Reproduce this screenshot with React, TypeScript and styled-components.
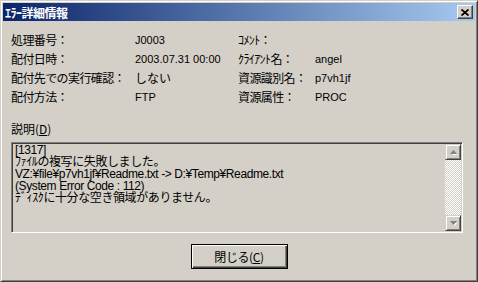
import React from "react";
import styled, { createGlobalStyle } from "styled-components";

const GlobalStyle = createGlobalStyle`
  html, body {
    margin: 0;
    padding: 0;
    background: #d4d0c8;
  }
  body {
    font-family: "Liberation Sans", "Noto Sans CJK JP", sans-serif;
    font-size: 12px;
    color: #000;
  }
`;

const FACE = "#d4d0c8";

const Window = styled.div`
  box-sizing: border-box;
  width: 478px;
  height: 282px;
  background: ${FACE};
  border-top: 1px solid ${FACE};
  border-left: 1px solid ${FACE};
  border-right: 1px solid #404040;
  border-bottom: 1px solid #404040;
  box-shadow: inset 1px 1px #fff, inset -1px -1px #808080;
  padding: 2px;
  display: flex;
  flex-direction: column;
`;

const TitleBar = styled.div`
  height: 18px;
  display: flex;
  align-items: center;
  justify-content: space-between;
  padding: 0 2px 0 2px;
  background: linear-gradient(to right, #0a246a, #a6caf0);
`;

const Title = styled.span`
  color: #fff;
  font-weight: bold;
  font-size: 12px;
  font-family: "Noto Sans CJK JP", sans-serif;
  letter-spacing: -0.5px;
`;

const CloseButton = styled.div`
  box-sizing: border-box;
  width: 16px;
  height: 14px;
  background: ${FACE};
  border-top: 1px solid #fff;
  border-left: 1px solid #fff;
  border-right: 1px solid #404040;
  border-bottom: 1px solid #404040;
  box-shadow: inset -1px -1px #808080;
  display: flex;
  align-items: center;
  justify-content: center;
`;

const Body = styled.div`
  flex: 1;
  padding: 9px 8px 0 8px;
  display: flex;
  flex-direction: column;
`;

const InfoGrid = styled.div`
  display: grid;
  grid-template-columns: 124px 103px 77px 1fr;
  grid-auto-rows: 19px;
  align-items: center;
`;

const Label = styled.span`
  font-family: "Noto Sans CJK JP", sans-serif;
  font-size: 12px;
  white-space: nowrap;
  letter-spacing: -0.6px;
`;

const Value = styled.span<{ $jp?: boolean }>`
  font-size: ${({ $jp }) => ($jp ? "12px" : "11px")};
  font-family: ${({ $jp }) =>
    $jp ? '"Noto Sans CJK JP", sans-serif' : '"Liberation Sans", sans-serif'};
  white-space: nowrap;
`;

const SectionLabel = styled.div`
  margin-top: 16px;
  margin-bottom: 6px;
  line-height: 14px;
  font-family: "Noto Sans CJK JP", sans-serif;
`;

const TextBox = styled.div`
  box-sizing: border-box;
  width: 452px;
  height: 91px;
  display: flex;
  border-top: 1px solid #808080;
  border-left: 1px solid #808080;
  border-right: 1px solid #fff;
  border-bottom: 1px solid #fff;
  box-shadow: inset 1px 1px #404040, inset -1px -1px ${FACE};
  padding: 1px;
  background: ${FACE};
`;

const TextArea = styled.div`
  flex: 1;
  padding: 0 2px;
  overflow: hidden;
  white-space: pre;
  font-family: "Liberation Sans", "Noto Sans CJK JP", sans-serif;
  font-size: 12px;
  line-height: 12px;
  letter-spacing: -0.4px;
`;

const ScrollBar = styled.div`
  width: 16px;
  display: flex;
  flex-direction: column;
`;

const ScrollButton = styled.div`
  box-sizing: border-box;
  width: 16px;
  height: 16px;
  background: ${FACE};
  border-top: 1px solid ${FACE};
  border-left: 1px solid ${FACE};
  border-right: 1px solid #404040;
  border-bottom: 1px solid #404040;
  box-shadow: inset 1px 1px #fff, inset -1px -1px #808080;
  display: flex;
  align-items: center;
  justify-content: center;
`;

const Track = styled.div`
  flex: 1;
  background: repeating-conic-gradient(#fff 0 25%, ${FACE} 0 50%) 0 0 / 2px 2px;
`;

const ButtonRow = styled.div`
  display: flex;
  justify-content: center;
  margin-top: 11px;
`;

const DefaultButton = styled.div`
  box-sizing: border-box;
  width: 97px;
  height: 25px;
  border: 1px solid #000;
  background: ${FACE};
  box-shadow: inset 1px 1px #fff, inset -1px -1px #404040, inset -2px -2px #808080;
  display: flex;
  align-items: center;
  justify-content: center;
  font-family: "Noto Sans CJK JP", sans-serif;
  font-size: 12px;
  letter-spacing: -0.4px;
`;

const Mnemonic = styled.span`
  text-decoration: underline;
  text-underline-offset: 1px;
`;

const Arrow = ({ down }: { down?: boolean }) => (
  <svg width="7" height="5" viewBox="0 0 7 5">
    <polygon
      points={down ? "1,1 6,1 3.5,4 " : "3.5,1 6,4 1,4"}
      fill="#fff"
      transform="translate(1,1)"
    />
    <polygon points={down ? "0,0 7,0 3.5,4" : "3.5,0 7,4 0,4"} fill="#808080" />
  </svg>
);

const rows: [string, string, boolean, string, string, boolean][] = [
  ["処理番号：", "J0003", false, "ｺﾒﾝﾄ：", "", false],
  ["配付日時：", "2003.07.31 00:00", false, "ｸﾗｲｱﾝﾄ名：", "angel", false],
  ["配付先での実行確認：", "しない", true, "資源識別名：", "p7vh1jf", false],
  ["配付方法：", "FTP", false, "資源属性：", "PROC", false],
];

const description = [
  "[1317]",
  "ﾌｧｲﾙの複写に失敗しました。",
  "VZ:¥file¥p7vh1jf¥Readme.txt -> D:¥Temp¥Readme.txt",
  "(System Error Code : 112)",
  "ﾃﾞｨｽｸに十分な空き領域がありません。",
].join("\n");

export default function App() {
  return (
    <>
      <GlobalStyle />
      <Window>
        <TitleBar>
          <Title>ｴﾗｰ詳細情報</Title>
          <CloseButton>
            <svg width="8" height="7" viewBox="0 0 8 7">
              <path d="M0.5 0.5 L7.5 6.5 M7.5 0.5 L0.5 6.5" stroke="#000" strokeWidth="1.8" />
            </svg>
          </CloseButton>
        </TitleBar>
        <Body>
          <InfoGrid>
            {rows.map(([l1, v1, jp1, l2, v2, jp2]) => (
              <React.Fragment key={l1}>
                <Label>{l1}</Label>
                <Value $jp={jp1}>{v1}</Value>
                <Label>{l2}</Label>
                <Value $jp={jp2}>{v2}</Value>
              </React.Fragment>
            ))}
          </InfoGrid>
          <SectionLabel>
            説明(<Mnemonic>D</Mnemonic>)
          </SectionLabel>
          <TextBox>
            <TextArea>{description}</TextArea>
            <ScrollBar>
              <ScrollButton>
                <Arrow />
              </ScrollButton>
              <Track />
              <ScrollButton>
                <Arrow down />
              </ScrollButton>
            </ScrollBar>
          </TextBox>
          <ButtonRow>
            <DefaultButton>
              閉じる(<Mnemonic>C</Mnemonic>)
            </DefaultButton>
          </ButtonRow>
        </Body>
      </Window>
    </>
  );
}
